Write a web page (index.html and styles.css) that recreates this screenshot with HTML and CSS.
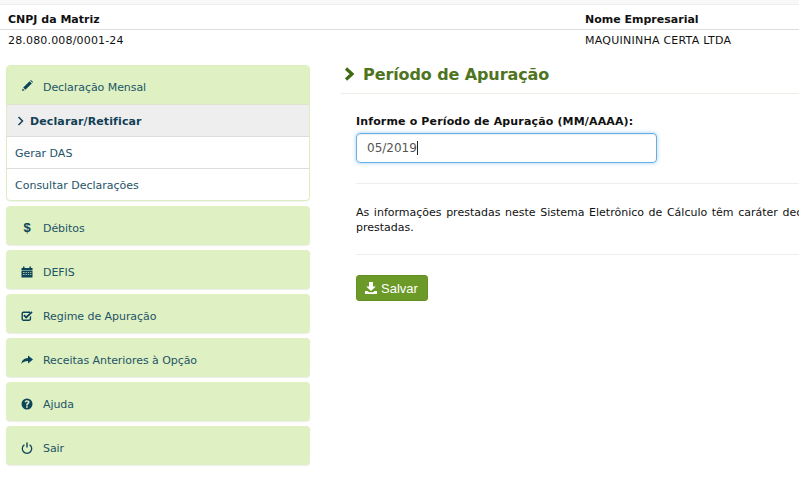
FILE: index.html
```html
<!DOCTYPE html>
<html lang="pt-BR">
<head>
<meta charset="utf-8">
<title>Período de Apuração</title>
<link rel="stylesheet" href="styles.css">
</head>
<body>
<div class="top-strip"></div>
<div class="info-grid">
  <div class="info-head">CNPJ da Matriz</div>
  <div class="info-head">Nome Empresarial</div>
  <div class="info-value">28.080.008/0001-24</div>
  <div class="info-value caps">MAQUININHA CERTA LTDA</div>
</div>
<div class="layout">
  <nav class="sidebar">
    <div class="panel">
      <a class="panel-head">
        <svg class="ico" viewBox="0 0 12 12"><path d="M8.6 1.2 10.8 3.4 4.4 9.8 2.2 7.6ZM1.7 8.4 3.6 10.3 1 11Z"/><path d="M9.2.6 10 0 12 2l-.6.8Z"/></svg>
        <span>Declaração Mensal</span>
      </a>
      <ul class="sub">
        <li class="sub-item active"><svg class="chev" viewBox="0 0 8 10"><path d="M1.5 1 5.500 5 1.500 9" fill="none" stroke="currentColor" stroke-width="1.5"/></svg>Declarar/Retificar</li>
        <li class="sub-item">Gerar DAS</li>
        <li class="sub-item">Consultar Declarações</li>
      </ul>
    </div>
    <a class="panel-head solo">
      <span class="ico dollar">$</span>
      <span>Débitos</span>
    </a>
    <a class="panel-head solo">
      <svg class="ico" viewBox="0 0 12 12"><path d="M2 .5h1.500V2h5V.5H10V2h1.500v2H.5V2H2ZM.5 4.600h11v6.900H.5ZM2 6.200v.8h1.600v-.8Zm2.600 0v.8h1.300v-.8Zm2.300 0v.8h1.200v-.8Zm2.200 0v.8h1.300v-.8ZM2 8.300v.8h1.600v-.8Zm2.600 0v.8h1.300v-.8Zm2.300 0v.8h1.200v-.8Zm2.200 0v.8h1.300v-.8Z" fill-rule="evenodd"/></svg>
      <span>DEFIS</span>
    </a>
    <a class="panel-head solo">
      <svg class="ico" viewBox="0 0 12 12"><path d="M2.500 1.500h6.500v1.400H2.600a.7.7 0 0 0-.7.7v5.300c0 .4.300.7.7.7H8c.4 0 .7-.3.7-.7V7.200l1.400-1.400v3.200c0 1-.9 1.900-1.900 1.900H2.400c-1 0-1.900-.9-1.900-1.900V3.400c0-1 .9-1.900 2-1.900Z"/><path d="M2.900 5.200 5.200 7.500 11 1.800" fill="none" stroke="currentColor" stroke-width="1.800"/></svg>
      <span>Regime de Apuração</span>
    </a>
    <a class="panel-head solo">
      <svg class="ico" viewBox="0 0 12 12"><path d="M7 1.500 12 5.500 7 9.500V7C4.200 7 2 7.800.3 10 .8 6.500 3 4.200 7 4Z"/></svg>
      <span>Receitas Anteriores à Opção</span>
    </a>
    <a class="panel-head solo">
      <svg class="ico" viewBox="0 0 12 12"><path fill-rule="evenodd" d="M6 .5a5.500 5.500 0 1 1 0 11 5.500 5.500 0 0 1 0-11ZM5.100 8.300v1.500h1.700V8.300ZM6.100 2.200C4.800 2.200 3.800 2.800 3.600 4.100l1.500.3c.1-.6.400-.9 1-.9.500 0 .8.300.8.700 0 .9-1.800 1.100-1.800 2.900v.4h1.700v-.3c0-1.100 1.800-1.400 1.800-3.100 0-1.200-1-1.900-2.500-1.900Z"/></svg>
      <span>Ajuda</span>
    </a>
    <a class="panel-head solo">
      <svg class="ico" viewBox="0 0 12 12"><path d="M3.400 2.700a4.700 4.700 0 1 0 5.200 0" fill="none" stroke="currentColor" stroke-width="1.300"/><path d="M6 .5v5" fill="none" stroke="currentColor" stroke-width="1.400"/></svg>
      <span>Sair</span>
    </a>
  </nav>
  <main class="content">
    <h1 class="title"><svg class="title-chev" viewBox="0 0 12 14"><path d="M2 1.500 8 7 2 12.500" fill="none" stroke="currentColor" stroke-width="3.200"/></svg>Período de Apuração</h1>
    <div class="form">
      <label class="field-label">Informe o Período de Apuração (MM/AAAA):</label>
      <div class="field-input">05/2019<span class="caret"></span></div>
      <hr class="rule first">
      <p class="note">As informações prestadas neste Sistema Eletrônico de Cálculo têm caráter declaratório, constituindo confissão de dívida e instrumento hábil e suficiente para a exigência dos tributos e contribuições resultantes das informações<br>prestadas.</p>
      <hr class="rule second">
      <button class="save" type="button">
        <svg class="save-ico" viewBox="0 0 12 12"><path d="M4 0h4v4.500h2.800L6 9 1.200 4.500H4ZM0 9h2.500L4 10.300h4L9.500 9H12v3H0Z"/></svg>Salvar
      </button>
    </div>
  </main>
</div>
</body>
</html>
```
FILE: styles.css
```css
html, body { margin: 0; padding: 0; }
html { overflow: hidden; }
body {
  width: 799px;
  height: 490px;
  overflow: hidden;
  background: #fff;
  font-family: "DejaVu Sans", Verdana, sans-serif;
  font-size: 11px;
  color: #111;
}
.top-strip {
  height: 4px;
  background: #f8f8f8;
  border-bottom: 1px solid #eee;
}
.info-grid {
  display: grid;
  grid-template-columns: 577px 222px;
  grid-template-rows: 25px 22px;
}
.info-head {
  padding: 8px 0 0 8px;
  line-height: 14px;
  font-weight: bold;
  border-bottom: 1px solid #ddd;
  box-sizing: border-box;
}
.info-value {
  padding: 4px 0 0 8px;
  line-height: 14px;
  letter-spacing: .17px;
}
.info-value.caps { letter-spacing: .24px; }
.layout {
  display: flex;
  align-items: flex-start;
  margin-top: 13px;
  padding-left: 6px;
}
.sidebar {
  width: 304px;
  flex: none;
  display: flex;
  flex-direction: column;
  gap: 5px;
}
.panel {
  border: 1px solid #dcedc0;
  border-radius: 4px;
  overflow: hidden;
  box-shadow: 0 1px 1px rgba(0,0,0,.05);
}
.panel .panel-head {
  margin: -1px -1px 0;
  border-radius: 0;
  box-shadow: none;
  border-bottom: 1px solid #dde5d0;
  box-sizing: content-box;
  height: 39px;
}
.panel-head {
  display: flex;
  align-items: center;
  gap: 10px;
  padding-left: 9px;
  height: 39px;
  box-sizing: border-box;
  background: #dff0c2;
  color: #1d5468;
  letter-spacing: -.06px;
}
.panel-head span:last-child { position: relative; top: 3px; }
.solo {
  border-radius: 4px;
  box-shadow: 0 1px 1px rgba(0,0,0,.08);
}
.ico {
  width: 12px;
  height: 12px;
  flex: none;
  fill: #0c4459;
  color: #0c4459;
  margin-left: 6px;
  position: relative;
  top: 2px;
}
.panel .ico { top: 1px; }
.dollar {
  font-size: 13px;
  line-height: 12px;
  font-weight: bold;
  text-align: center;
  font-family: "Liberation Sans", sans-serif;
}
.sub {
  list-style: none;
  margin: 0;
  padding: 0;
}
.sub-item {
  height: 32px;
  line-height: 34px;
  padding-left: 8px;
  box-sizing: border-box;
  border-bottom: 1px solid #ddd;
  color: #1d5468;
  overflow: hidden;
}
.sub-item:last-child { border-bottom: 0; height: 31px; }
.sub-item.active {
  background: #eee;
  font-weight: bold;
  color: #123f55;
  display: flex;
  align-items: center;
  padding: 2px 0 0 10px;
  letter-spacing: .12px;
}
.chev { width: 8px; height: 10px; margin-right: 5px; color: #123f55; position: relative; top: -1px; }
.content {
  width: 1700px;
  flex: none;
  margin-left: 31px;
}
.title {
  margin: 0;
  height: 28px;
  border-bottom: 1px solid #eeeee6;
  padding-left: 3px;
  font-size: 16px;
  line-height: 20px;
  font-weight: bold;
  color: #4e7421;
  letter-spacing: -.1px;
  display: flex;
  align-items: flex-start;
}
.title-chev { width: 12px; height: 14px; margin: 2px 7px 0 0; color: #3f6a12; flex: none; }
.form {
  padding-left: 15px;
}
.field-label {
  display: block;
  margin-top: 21px;
  line-height: 14px;
  font-weight: bold;
  letter-spacing: .15px;
}
.field-input {
  margin-top: 4px;
  width: 301px;
  height: 30px;
  box-sizing: border-box;
  border: 1px solid #66afe9;
  border-radius: 4px;
  box-shadow: inset 0 1px 1px rgba(0,0,0,.075), 0 0 4px rgba(102,175,233,.6);
  padding: 0 10px;
  font-size: 12px;
  line-height: 28px;
  color: #555;
}
.caret {
  display: inline-block;
  width: 1px;
  height: 14px;
  background: #222;
  vertical-align: -3px;
}
.rule {
  margin: 0;
  border: 0;
  border-top: 1px solid #eee;
}
.first { margin-top: 20px; }
.second { margin-top: 19px; }
.note {
  margin: 21px 0 0;
  line-height: 15px;
  word-spacing: 1.1px;
  color: #111;
}
.save {
  display: flex;
  align-items: center;
  margin-top: 20px;
  width: 72px;
  height: 26px;
  padding: 0 0 0 8px;
  border: 1px solid #64901f;
  border-radius: 3px;
  background: #6c9a28;
  color: #fff;
  font-family: "Liberation Sans", Arial, sans-serif;
  font-size: 13px;
}
.save-ico { width: 12px; height: 12px; fill: #fff; margin-right: 4px; flex: none; }
```
